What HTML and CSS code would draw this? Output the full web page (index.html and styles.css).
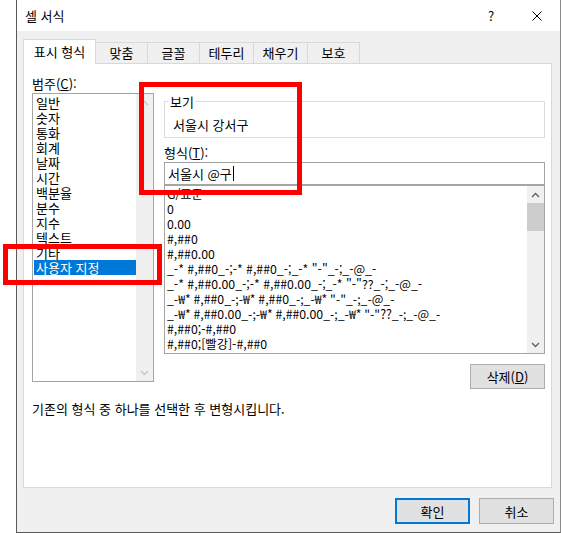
FILE: index.html
```html
<!DOCTYPE html>
<html lang="ko">
<head>
  <meta charset="UTF-8">
  <title>셀 서식</title>
  <link rel="stylesheet" href="styles.css">
</head>
<body>
  <div class="dialog">
    <div class="titlebar">
      <span class="title">셀 서식</span>
      <span class="caption-btn">?</span>
      <span class="caption-btn">
        <svg width="10" height="10" viewBox="0 0 10 10"><path d="M0.5 0.5L9.5 9.5M9.5 0.5L0.5 9.5" stroke="#000" stroke-width="1" fill="none"/></svg>
      </span>
    </div>

    <div class="body">
      <div class="tabs">
        <div class="tab active">표시 형식</div>
        <div class="tab">맞춤</div>
        <div class="tab">글꼴</div>
        <div class="tab wide">테두리</div>
        <div class="tab wide">채우기</div>
        <div class="tab">보호</div>
      </div>

      <div class="panel">
        <div class="columns">
          <div class="col-left">
            <div class="label">범주(<u>C</u>):</div>
            <div class="listbox cat-list">
              <ul class="items">
                <li>일반</li>
                <li>숫자</li>
                <li>통화</li>
                <li>회계</li>
                <li>날짜</li>
                <li>시간</li>
                <li>백분율</li>
                <li>분수</li>
                <li>지수</li>
                <li>텍스트</li>
                <li>기타</li>
                <li class="selected">사용자 지정</li>
              </ul>
              <div class="scrollbar disabled">
                <span class="arrow"><svg width="9" height="6" viewBox="0 0 9 6"><path d="M1 5L4.5 1.5L8 5" stroke="#c5c5c5" stroke-width="1.4" fill="none"/></svg></span>
                <span class="track"></span>
                <span class="arrow"><svg width="9" height="6" viewBox="0 0 9 6"><path d="M1 1L4.5 4.5L8 1" stroke="#c5c5c5" stroke-width="1.4" fill="none"/></svg></span>
              </div>
            </div>
          </div>

          <div class="col-right">
            <fieldset class="sample">
              <legend>보기</legend>
              <div>서울시 강서구</div>
            </fieldset>
            <div class="label label-gap">형식(<u>T</u>):</div>
            <div class="textbox">서울시 @구<span class="caret"></span></div>
            <div class="listbox fmt-list">
              <ul class="items">
                <li>G/표준</li>
                <li>0</li>
                <li>0.00</li>
                <li>#,##0</li>
                <li>#,##0.00</li>
                <li>_-* #,##0_-;-* #,##0_-;_-* "-"_-;_-@_-</li>
                <li>_-* #,##0.00_-;-* #,##0.00_-;_-* "-"??_-;_-@_-</li>
                <li>_-₩* #,##0_-;-₩* #,##0_-;_-₩* "-"_-;_-@_-</li>
                <li>_-₩* #,##0.00_-;-₩* #,##0.00_-;_-₩* "-"??_-;_-@_-</li>
                <li>#,##0;-#,##0</li>
                <li>#,##0;[빨강]-#,##0</li>
              </ul>
              <div class="scrollbar">
                <span class="arrow"><svg width="9" height="6" viewBox="0 0 9 6"><path d="M1 5L4.5 1.5L8 5" stroke="#606060" stroke-width="1.4" fill="none"/></svg></span>
                <span class="track"><span class="thumb"></span></span>
                <span class="arrow"><svg width="9" height="6" viewBox="0 0 9 6"><path d="M1 1L4.5 4.5L8 1" stroke="#606060" stroke-width="1.4" fill="none"/></svg></span>
              </div>
            </div>
            <div class="actions">
              <button class="btn">삭제(<u>D</u>)</button>
            </div>
          </div>
        </div>
        <p class="hint">기존의 형식 중 하나를 선택한 후 변형시킵니다.</p>
      </div>

      <div class="footer">
        <button class="btn primary">확인</button>
        <button class="btn">취소</button>
      </div>
    </div>
  </div>

  <!-- red highlight boxes drawn over the dialog -->
  <div class="mark mark-sample"></div>
  <div class="mark mark-custom"></div>
</body>
</html>
```

FILE: styles.css
```css
:root {
  --dialog-bg: #f0f0f0;
  --tab-border: #d9d9d9;
  --field-border: #a5a5a5;
  --btn-bg: #e1e1e1;
  --btn-border: #adadad;
  --select-blue: #0078d7;
  --mark-red: #ff0000;
}
* {
  box-sizing: border-box;
}
body {
  margin: 0;
  background: #ffffff;
  font-family: "Noto Sans CJK KR", "Liberation Sans", sans-serif;
  font-size: 13px;
  line-height: 15px;
  color: #000;
}
.dialog {
  margin-left: 16px;
  width: 545px;
  height: 533px;
  border-left: 1px solid #5a5a5a;
  border-right: 1px solid #8a8a8a;
  border-bottom: 1px solid #5a5a5a;
  background: var(--dialog-bg);
}
.titlebar {
  height: 31px;
  background: #ffffff;
  display: flex;
  align-items: center;
}
.title {
  flex: 1;
  padding-left: 8px;
}
.caption-btn {
  width: 46px;
  height: 31px;
  display: flex;
  align-items: center;
  justify-content: center;
  font-size: 13px;
}

/* tabs */
.tabs {
  display: flex;
  align-items: flex-end;
  height: 32px;
  margin-left: 6px;
}
.tab {
  width: 52px;
  height: 21px;
  line-height: 20px;
  text-align: center;
  border: 1px solid var(--tab-border);
  border-bottom: none;
  border-left: none;
  background: var(--dialog-bg);
  white-space: nowrap;
}
.tab.wide {
  width: 54px;
}
.tab.active {
  width: 73px;
  height: 25px;
  margin-bottom: -1px;
  line-height: 24px;
  border-left: 1px solid var(--tab-border);
  background: #ffffff;
  position: relative;
  z-index: 1;
}

/* main panel */
.panel {
  margin-left: 6px;
  width: 529px;
  height: 425px;
  border: 1px solid var(--tab-border);
  background: #ffffff;
  padding: 0 6px 0 8px;
}
.columns {
  display: flex;
  gap: 10px;
}
.col-left {
  width: 122px;
}
.col-right {
  flex: 1;
}
.label {
  margin-top: 12px;
}
.label-gap {
  margin-top: 7px;
}
.listbox {
  display: flex;
  border: 1px solid var(--field-border);
  background: #ffffff;
}
.cat-list {
  margin-top: 2px;
  height: 289px;
}
.fmt-list {
  height: 169px;
  font-size: 12.3px;
}
.items {
  flex: 1;
  list-style: none;
  margin: 0;
  padding: 1px 0 0 0;
  overflow: hidden;
  white-space: nowrap;
}
.cat-list li {
  padding-left: 2px;
  margin-left: 1px;
}
.cat-list li.selected {
  background: var(--select-blue);
  color: #ffffff;
}
.fmt-list li {
  padding-left: 2px;
}
.scrollbar {
  width: 17px;
  display: flex;
  flex-direction: column;
  background: var(--dialog-bg);
}
.scrollbar .arrow {
  height: 17px;
  display: flex;
  align-items: center;
  justify-content: center;
}
.scrollbar .track {
  flex: 1;
}
.thumb {
  display: block;
  height: 28px;
  background: #cdcdcd;
}

/* sample group */
.sample {
  margin: 30px 0 0 0;
  padding: 8px 0 5px 8px;
  border: 1px solid #dcdcdc;
  min-width: 0;
}
.sample legend {
  margin-left: -5px;
  padding: 0 2px;
}
.textbox {
  margin-top: 2px;
  height: 23px;
  border: 1px solid var(--field-border);
  padding: 3px 0 0 3px;
  display: flex;
  align-items: flex-start;
}
.caret {
  display: inline-block;
  width: 1px;
  height: 15px;
  margin-left: 1px;
  background: #000;
}
.actions {
  display: flex;
  justify-content: flex-end;
  margin-top: 10px;
}

/* buttons */
.btn {
  width: 75px;
  height: 25px;
  padding: 0;
  font: inherit;
  color: #000;
  background: var(--btn-bg);
  border: 1px solid var(--btn-border);
}
.btn.primary {
  border: 2px solid var(--select-blue);
}
.hint {
  margin: 12px 0 0 0;
}
.footer {
  display: flex;
  justify-content: flex-end;
  gap: 9px;
  padding: 10px 6px 0 0;
}
.footer .btn {
  height: 26px;
}

/* annotations */
.mark {
  position: absolute;
  border: 5px solid var(--mark-red);
}
.mark-sample {
  left: 139px;
  top: 82px;
  width: 163px;
  height: 113px;
}
.mark-custom {
  left: 3px;
  top: 244px;
  width: 159px;
  height: 41px;
}
```
